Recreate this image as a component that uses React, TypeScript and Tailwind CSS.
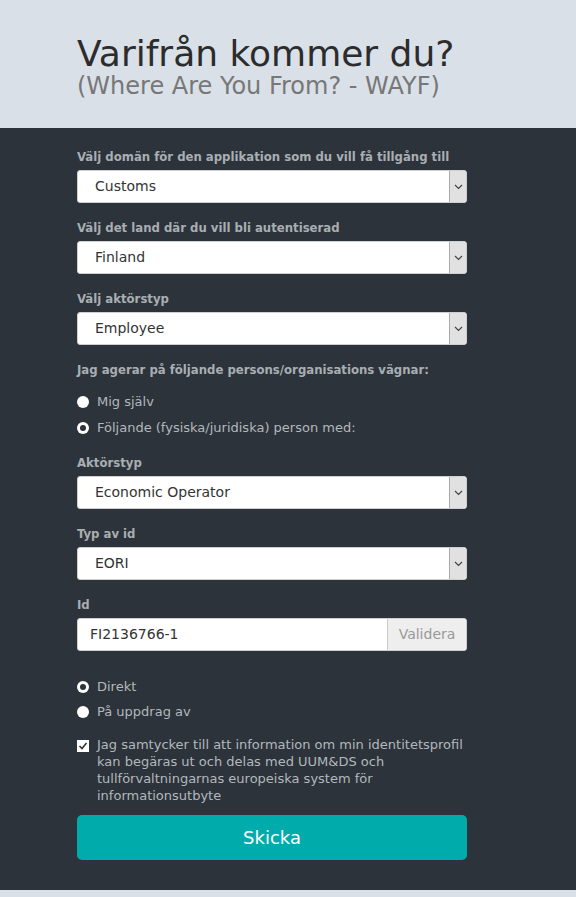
const font = { fontFamily: '"DejaVu Sans", Verdana, sans-serif' };
const labelFont = { fontFamily: '"DejaVu Sans Condensed", "DejaVu Sans", sans-serif' };

const Chevron = () => (
  <svg width="9" height="6" viewBox="0 0 9 6" fill="none">
    <path d="M1 1l3.5 3.5L8 1" stroke="#444" strokeWidth="1.2" />
  </svg>
);

const Label = ({ text, className = 'mb-[4px]' }: { text: string; className?: string }) => (
  <div style={labelFont} className={`${className} text-[13px] font-bold leading-[18px] text-[#a9aeb3]`}>
    {text}
  </div>
);

const Select = ({ value }: { value: string }) => (
  <div className="flex h-[33px] w-full items-stretch overflow-hidden rounded-[3px] border border-[#cfcfcf] bg-white">
    <div className="flex flex-1 items-center pl-[17px] text-[14px] text-[#333]">{value}</div>
    <div className="flex w-[17px] items-center justify-center border-l border-[#aaa] bg-[#e1e1e1]">
      <Chevron />
    </div>
  </div>
);

const Field = ({ label, children }: { label: string; children: React.ReactNode }) => (
  <div className="mb-[16px]">
    <Label text={label} />
    {children}
  </div>
);

const Radio = ({ label, checked, tight }: { label: string; checked?: boolean; tight?: boolean }) => (
  <div className={`flex items-center gap-[8px] ${tight ? 'h-[25px]' : 'h-[26px]'}`}>
    <span className="flex h-[12px] w-[12px] items-center justify-center rounded-full bg-white">
      {checked && <span className="h-[6px] w-[6px] rounded-full bg-[#2c333a]" />}
    </span>
    <span className="text-[13px] text-[#b3b8bd]">{label}</span>
  </div>
);

export default function App() {
  return (
    <div style={font} className="min-h-[897px] w-[576px] bg-[#d9e0e8]">
      <div className="h-[128px] pl-[77px] pt-[34px]">
        <h1 className="text-[36px] leading-[40px] text-[#2c2c2c]">Varifrån kommer du?</h1>
        <p className="text-[24px] leading-[24px] text-[#777]">(Where Are You From? - WAYF)</p>
      </div>
      <div className="bg-[#2c333a] pt-[20px] pb-[30px]">
        <div className="ml-[77px] w-[390px]">
          <Field label="Välj domän för den applikation som du vill få tillgång till">
            <Select value="Customs" />
          </Field>
          <Field label="Välj det land där du vill bli autentiserad">
            <Select value="Finland" />
          </Field>
          <Field label="Välj aktörstyp">
            <Select value="Employee" />
          </Field>
          <Label text="Jag agerar på följande persons/organisations vägnar:" className="mb-[10px]" />
          <div className="mb-[13px]">
            <Radio label="Mig själv" />
            <Radio label="Följande (fysiska/juridiska) person med:" checked />
          </div>
          <Field label="Aktörstyp">
            <Select value="Economic Operator" />
          </Field>
          <Field label="Typ av id">
            <Select value="EORI" />
          </Field>
          <div className="mb-[23px]">
            <Label text="Id" />
            <div className="flex h-[33px] overflow-hidden rounded-[3px] border border-[#cfcfcf] bg-white">
              <div className="flex flex-1 items-center pl-[12px] text-[14px] text-[#333]">FI2136766-1</div>
              <div className="flex w-[79px] items-center justify-center border-l border-[#ccc] bg-[#eee] text-[14px] text-[#999]">
                Validera
              </div>
            </div>
          </div>
          <div className="mb-[12px]">
            <Radio label="Direkt" checked tight />
            <Radio label="På uppdrag av" tight />
          </div>
          <div className="mb-[11px] flex gap-[8px]">
            <span className="mt-[4px] flex h-[12px] w-[12px] shrink-0 items-center justify-center bg-white">
              <svg width="10" height="10" viewBox="0 0 10 10" fill="none">
                <path d="M1.5 5l2.5 2.5L8.5 2" stroke="#333" strokeWidth="1.6" />
              </svg>
            </span>
            <p className="text-[13px] leading-[17px] text-[#b3b8bd]">
              Jag samtycker till att information om min identitetsprofil kan begäras ut och delas med UUM&amp;DS och
              tullförvaltningarnas europeiska system för informationsutbyte
            </p>
          </div>
          <button className="h-[45px] w-full rounded-[5px] bg-[#00abab] text-[18px] text-white">Skicka</button>
        </div>
      </div>
    </div>
  );
}
